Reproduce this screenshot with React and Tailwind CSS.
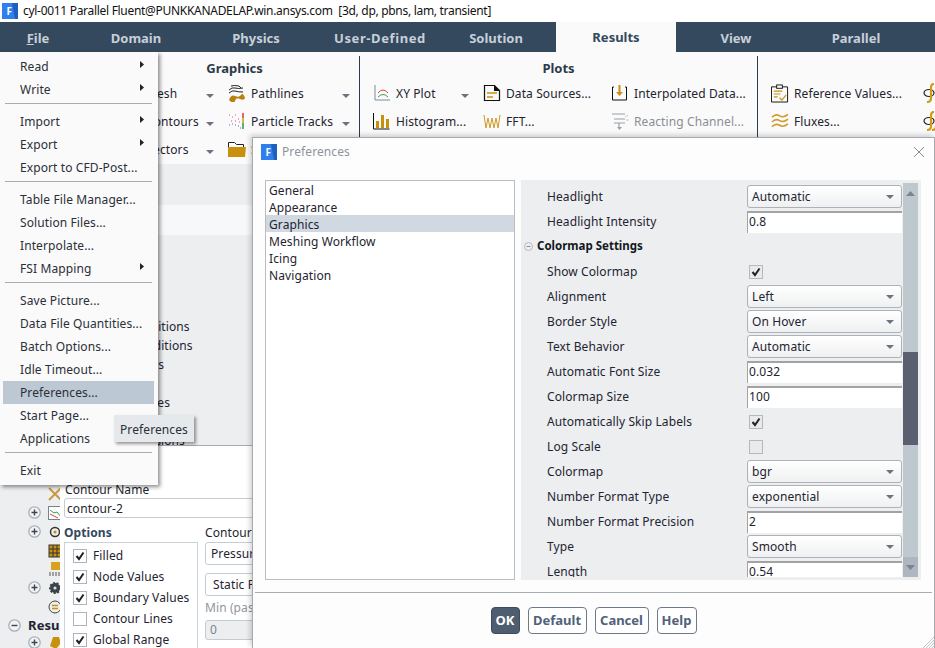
import React from 'react';

const FluentLogo = () => (
  <svg width="16" height="16" viewBox="0 0 16 16" className="shrink-0">
    <rect width="16" height="16" fill="#2f80ed" />
    <polygon points="10,0 16,0 16,16 13,16" fill="#1f5fc0" />
    <text x="4.5" y="12" fontSize="10" fontWeight="700" fill="#fff" fontFamily="Noto Sans">F</text>
  </svg>
);

const Caret = ({ className = '' }) => (
  <svg width="8" height="4" viewBox="0 0 8 4" className={`shrink-0 ${className}`}>
    <polygon points="0,0 8,0 4,4" fill="#6c7380" />
  </svg>
);

const SubArrow = () => (
  <svg width="4" height="7" viewBox="0 0 4 7" className="absolute left-[137px] top-[6px]">
    <polygon points="0,0 4,3.5 0,7" fill="#222" />
  </svg>
);

const Pathlines = () => (
  <svg width="18" height="18" viewBox="0 0 18 18">
    <path d="M1 6q3-3 6-2t8 0M1 9q3-3 6-2t8 1M3 2q3-1 8 0l2 2" fill="none" stroke="#222" strokeWidth="1" />
    <path d="M1 16q2-6 6-4t6-1 4 3q-1 3-5 1t-5 2-6-1z" fill="#b9810f" />
  </svg>
);
const ParticleTracks = () => (
  <svg width="18" height="18" viewBox="0 0 18 18">
    <path d="M1 3h1M4 5h1M7 3h1M10 7h1M3 9h1M7 9h1M11 10h1" stroke="#e2546a" strokeWidth="1" />
    <path d="M1 13h1M4 12h1M7 13h1M10 14h1M12 16h1" stroke="#4a6fd0" strokeWidth="1" />
    <path d="M15 1v5" stroke="#d33" strokeWidth="1.500" />
    <path d="M15 6v5" stroke="#c8a010" strokeWidth="1.500" />
    <path d="M15 11v6" stroke="#2a9a40" strokeWidth="1.500" />
  </svg>
);
const Folder = () => (
  <svg width="18" height="18" viewBox="0 0 18 18">
    <path d="M.5 10V2.500h6l2 2h7V8" fill="#fff" stroke="#222" strokeWidth="1" />
    <path d="M0 7h18l-1 10H0z" fill="#c9900f" />
  </svg>
);
const XYPlot = () => (
  <svg width="18" height="18" viewBox="0 0 18 18">
    <path d="M2 1v15h15" fill="none" stroke="#7b8ba0" strokeWidth="1" />
    <path d="M5 9q5-6 10 0" fill="none" stroke="#d8453a" strokeWidth="1" />
    <path d="M5 13q5-5 10 0" fill="none" stroke="#3f9b4a" strokeWidth="1" />
  </svg>
);
const Histogram = () => (
  <svg width="18" height="18" viewBox="0 0 18 18">
    <path d="M.5 1v16h16" fill="none" stroke="#111" strokeWidth="1" />
    <rect x="3" y="9" width="3" height="7" fill="#c9900f" />
    <rect x="8" y="3" width="3" height="13" fill="#c9900f" />
    <rect x="13" y="7" width="3" height="9" fill="#c9900f" />
  </svg>
);
const DataSources = () => (
  <svg width="18" height="18" viewBox="0 0 18 18">
    <path d="M1.500 1.500h10l5 5v10h-15z" fill="none" stroke="#111" strokeWidth="1.200" />
    <path d="M11 1l6 6h-6z" fill="#111" />
    <path d="M4 9h10M4 13h6" stroke="#c9900f" strokeWidth="1.600" />
  </svg>
);
const Fft = () => (
  <svg width="18" height="18" viewBox="0 0 18 18">
    <path d="M1 3l2 13 2-10 2 10 2-10 2 10 2-10 2 10 2-13" fill="none" stroke="#cf9b2a" strokeWidth="1" />
  </svg>
);
const Interpolated = () => (
  <svg width="18" height="18" viewBox="0 0 18 18">
    <path d="M3 3H1.500v13h14V3H14" fill="none" stroke="#111" strokeWidth="1" />
    <path d="M8.500 1v9" stroke="#c9900f" strokeWidth="2" />
    <path d="M5 8h7l-3.500 4z" fill="#c9900f" />
  </svg>
);
const Reacting = () => (
  <svg width="18" height="18" viewBox="0 0 18 18">
    <path d="M1 2h13M3 7h11M3 11h11M8 11v5" stroke="#9aa0a6" strokeWidth="1.200" fill="none" />
    <path d="M6 15h5l-2.500 3z" fill="#9aa0a6" />
    <path d="M14 5l3-2M15 8h3" stroke="#c3c7cb" strokeWidth="1" />
  </svg>
);
const Clipboard = () => (
  <svg width="19" height="19" viewBox="0 0 19 19">
    <path d="M.5 2.500h17v16H.5z" fill="none" stroke="#111" strokeWidth="1" />
    <rect x="6" y=".5" width="6" height="3.500" fill="#fff" stroke="#111" strokeWidth="1" />
    <path d="M3 7h9M3 10h7M3 13h4" stroke="#c9900f" strokeWidth="1.200" />
    <path d="M9 14l2.500 2.500L16 11" fill="none" stroke="#c9900f" strokeWidth="1.200" />
  </svg>
);
const Fluxes = () => (
  <svg width="19" height="18" viewBox="0 0 19 18">
    <path d="M1 5q4-4 8-1.500t9-1.500M1 10q4-4 8-1.500t9-1.500M1 15q4-4 8-1.500t9-1.500" fill="none" stroke="#cf9b2a" strokeWidth="1.600" />
  </svg>
);
const Integral = ({ double }) => (
  <svg width="18" height="20" viewBox="0 0 18 20" className="shrink-0">
    <ellipse cx="6" cy="10" rx="5" ry="3.500" fill="none" stroke="#222" strokeWidth="1.200" />
    <path d="M11 1q-3 0-3 4v10q0 4-4 4" fill="none" stroke="#d49a1a" strokeWidth="2.200" />
    {double && <path d="M16 1q-3 0-3 4v10q0 4-4 4" fill="none" stroke="#d49a1a" strokeWidth="2.200" />}
    <path d="M19 1q-3 0-3 4v10q0 4-4 4" fill="none" stroke="#d49a1a" strokeWidth="2.200" />
  </svg>
);

const RibbonItem = ({ icon, label, caret, grey, className = '' }) => (
  <div className={`flex items-center h-[28px] whitespace-nowrap ${className}`}>
    {icon && <span className="w-[18px] mr-[5px] shrink-0 flex justify-center">{icon}</span>}
    <span className={`pt-[2px] ${grey ? 'text-[#8a8f96]' : ''}`}>{label}</span>
    {caret && <Caret className="ml-auto mt-[5px]" />}
  </div>
);

const Ribbon = () => (
  <div className="flex h-[112px] bg-[#fafafa] text-[#1e2430]">
    <div className="w-[110px]" />
    <div className="w-[250px] border-r border-[#2b3a4d] mt-[4px] pt-[2px]">
      <div className="h-[21px] text-center font-bold text-[13px] tracking-normal text-[#2e3a4a] leading-[20px]">Graphics</div>
      <div className="flex pl-[36px]">
        <div className="w-[82px] pr-[14px]">
          <RibbonItem label="Mesh" caret />
          <RibbonItem label="Contours" caret />
          <RibbonItem label="Vectors" caret />
        </div>
        <div className="w-[124px] pr-[2px]">
          <RibbonItem icon={<Pathlines />} label="Pathlines" caret />
          <RibbonItem icon={<ParticleTracks />} label="Particle Tracks" caret />
          <RibbonItem icon={<Folder />} label="Scene" />
        </div>
      </div>
    </div>
    <div className="w-[398px] border-r border-[#2b3a4d] mt-[4px] pt-[2px]">
      <div className="h-[21px] text-center font-bold text-[13px] tracking-normal text-[#2e3a4a] leading-[20px]">Plots</div>
      <div className="flex pl-[13px]">
        <div className="w-[110px]">
          <RibbonItem icon={<XYPlot />} label="XY Plot" caret className="pr-[14px]" />
          <RibbonItem icon={<Histogram />} label="Histogram..." />
        </div>
        <div className="w-[128px]">
          <RibbonItem icon={<DataSources />} label="Data Sources..." />
          <RibbonItem icon={<Fft />} label="FFT..." />
        </div>
        <div>
          <RibbonItem icon={<Interpolated />} label="Interpolated Data..." />
          <RibbonItem icon={<Reacting />} label="Reacting Channel..." grey />
        </div>
      </div>
    </div>
    <div className="flex-1 min-w-0 overflow-hidden pt-[27px] pl-[13px] flex">
      <div className="w-[152px] shrink-0">
        <RibbonItem icon={<Clipboard />} label="Reference Values..." />
        <RibbonItem icon={<Fluxes />} label="Fluxes..." />
      </div>
      <div className="shrink-0">
        <div className="h-[28px] flex items-center"><Integral /></div>
        <div className="h-[28px] flex items-center"><Integral double /></div>
      </div>
    </div>
  </div>
);

const TopTabs = () => (
  <div className="flex h-[30px] bg-[#34495e] font-bold text-[13px] tracking-normal text-[#c7d0d9]">
    <div className="w-[76px] text-center leading-[32px]"><span className="underline">F</span>ile</div>
    <div className="w-[120px] text-center leading-[32px]">Domain</div>
    <div className="w-[120px] text-center leading-[32px]">Physics</div>
    <div className="w-[120px] pl-[8px] text-center leading-[32px] tracking-[0.6px]">User-Defined</div>
    <div className="w-[120px] text-center leading-[32px]">Solution</div>
    <div className="w-[120px] text-center leading-[30px] bg-[#fafafa] text-[#34495e]">Results</div>
    <div className="w-[120px] text-center leading-[32px]">View</div>
    <div className="w-[120px] text-center leading-[32px]">Parallel</div>
  </div>
);

const PlusDot = ({ minus }) => (
  <svg width="13" height="13" viewBox="0 0 13 13" className="shrink-0">
    <circle cx="6.500" cy="6.500" r="5.700" fill="#f2f3f5" stroke="#a9b1b9" strokeWidth="1.300" />
    <path d={minus ? 'M3.500 6.500h6' : 'M3.500 6.500h6M6.500 3.500v6'} stroke="#3e4650" strokeWidth="1.400" />
  </svg>
);

const TreeIcon = ({ kind }) => {
  if (kind === 'wrench') return <svg width="14" height="14" viewBox="0 0 14 14"><path d="M1 1l12 12M13 1L1 13" stroke="#c79a3f" strokeWidth="2" /></svg>;
  if (kind === 'mesh') return <svg width="14" height="14" viewBox="0 0 14 14"><rect x=".5" y=".5" width="13" height="13" fill="#fff" stroke="#77818c" /><path d="M2 4l4 3 3-1 4 5" fill="none" stroke="#3f9b4a" /><path d="M2 8l4 2 4 2" fill="none" stroke="#d8453a" /></svg>;
  if (kind === 'lens') return <svg width="14" height="14" viewBox="0 0 14 14"><circle cx="7" cy="7" r="4.500" fill="none" stroke="#333" strokeWidth="1.500" /><circle cx="7" cy="7" r="1.600" fill="#c9900f" /></svg>;
  if (kind === 'grid') return <svg width="14" height="14" viewBox="0 0 14 14"><rect x="1" y="1" width="12" height="12" fill="#c9900f" stroke="#333" /><path d="M5 1v12M9 1v12M1 5h12M1 9h12" stroke="#333" /></svg>;
  if (kind === 'tower') return <svg width="14" height="16" viewBox="0 0 14 16"><rect x="3" y="1" width="9" height="8" fill="#d9a21b" /><path d="M1 12h12M1 14h12" stroke="#555" strokeDasharray="2 1" /></svg>;
  if (kind === 'gear') return <svg width="14" height="14" viewBox="0 0 14 14"><circle cx="7" cy="7" r="5" fill="#3c424a" stroke="#3c424a" strokeWidth="2" strokeDasharray="2 1.500" /><circle cx="7" cy="7" r="1.600" fill="#d9dde1" /></svg>;
  if (kind === 'equals') return <svg width="14" height="14" viewBox="0 0 14 14"><circle cx="7" cy="7" r="6" fill="none" stroke="#444" /><path d="M4 5.500h6M4 8.500h6" stroke="#c9900f" strokeWidth="1.300" /></svg>;
  return <svg width="14" height="14" viewBox="0 0 14 14"><path d="M5 1h6l2 6-5 6-6-3z" fill="#c9900f" /></svg>;
};

const treeRows = [
  { kind: 'wrench', h: 'h-[19px]' },
  { kind: 'mesh', plus: true, h: 'h-[19px]' },
  { kind: 'lens', plus: true, h: 'h-[19px]' },
  { kind: 'grid', h: 'h-[19px]' },
  { kind: 'tower', h: 'h-[18px]' },
  { kind: 'gear', plus: true, h: 'h-[19px]' },
  { kind: 'equals', h: 'h-[19px]' },
];

const TreePanel = () => (
  <div className="w-[252px] h-[484px] bg-[#eceef0] text-[#1e2430] overflow-hidden">
    <div className="h-[41px]" />
    <div className="h-[30px] bg-[#f7f8f9] rounded-[3px]" />
    <div className="h-[81px]" />
    {['Cell Zone Conditions', 'Boundary Conditions', 'Mesh Interfaces', 'Dynamic Mesh', 'Reference Values', 'Reference Frames', 'Named Expressions'].map((t) => (
      <div key={t} className="h-[19px] pl-[72px] leading-[21px] whitespace-nowrap">{t}</div>
    ))}
    <div className="h-[35px]" />
    {treeRows.map((r) => (
      <div key={r.kind} className={`flex items-center ${r.h} pl-[28px]`}>
        <span className="w-[20px] shrink-0">{r.plus && <PlusDot />}</span>
        <TreeIcon kind={r.kind} />
      </div>
    ))}
    <div className="flex items-center h-[19px] pl-[8px] font-bold text-[13px] whitespace-nowrap">
      <PlusDot minus />
      <span className="ml-[7px]">Results</span>
    </div>
    <div className="flex items-center h-[15px] pl-[28px]">
      <span className="w-[20px] shrink-0"><PlusDot /></span>
      <TreeIcon kind="blob" />
    </div>
  </div>
);

const menuGroups = [
  [['Read', 1], ['Write', 1]],
  [['Import', 1], ['Export', 1], ['Export to CFD-Post...']],
  [['Table File Manager...'], ['Solution Files...'], ['Interpolate...'], ['FSI Mapping', 1]],
  [['Save Picture...'], ['Data File Quantities...'], ['Batch Options...'], ['Idle Timeout...'], ['Preferences...'], ['Start Page...'], ['Applications']],
  [['Exit']],
];

const FileMenu = () => (
  <div className="absolute left-0 top-[52px] w-[158px] bg-[#fafafa] pt-[3px] pb-[3px] pl-[3px] pr-[4px] text-[#2a2f38] shadow-[2px_2px_4px_rgba(0,0,0,0.45)] z-30">
    {menuGroups.map((group, i) => (
      <div key={i}>
        {i > 0 && <div className="h-[9px] pt-[2px] px-[2px]"><div className="h-px w-full bg-[#a9acb0]" /></div>}
        {group.map(([label, sub]) => (
          <div key={label} className={`relative h-[23px] pl-[17px] leading-[24px] whitespace-nowrap ${label === 'Preferences...' ? 'bg-[#bcc8d3]' : ''}`}>
            {label}
            {sub && <SubArrow />}
          </div>
        ))}
      </div>
    ))}
  </div>
);

const SmallCheck = ({ checked, light }) => (
  <span className={`w-[14px] h-[14px] shrink-0 border flex items-center justify-center ${light ? 'border-[#b5b9bd] bg-[#e8eaec]' : 'border-[#aeb4ba] bg-white'}`}>
    {checked ? (
      <svg width="10" height="10" viewBox="0 0 10 10">
        <path d="M1.500 5l2.500 3L8.500 1.500" fill="none" stroke="#222" strokeWidth="2" />
      </svg>
    ) : null}
  </span>
);

const ContourDialog = () => (
  <div className="absolute left-[60px] top-[445px] w-[400px] h-[203px] border-t border-[#a8acb0] bg-white text-[#1e2430] overflow-hidden z-10">
    <div className="h-[35px]" />
    <div className="pl-[5px] h-[17px] leading-[17px]">Contour Name</div>
    <div className="ml-[4px] h-[20px] border border-[#c3cbd3] rounded-[3px] pl-[2px] leading-[20px]">contour-2</div>
    <div className="flex pl-[4px] mt-[6px]">
      <div className="w-[134px] shrink-0">
        <div className="font-bold text-[#34495e] h-[18px] leading-[18px]">Options</div>
        <div className="border border-[#ccd3da] h-[110px] pt-[2px] pl-[8px]">
          {[['Filled', 1], ['Node Values', 1], ['Boundary Values', 1], ['Contour Lines', 0], ['Global Range', 1]].map(([t, c]) => (
            <div key={t} className="flex items-center h-[21px] gap-[6px] whitespace-nowrap">
              <SmallCheck checked={c} />
              {t}
            </div>
          ))}
        </div>
      </div>
      <div className="ml-[7px] w-[200px]">
        <div className="h-[18px] leading-[18px]">Contours of</div>
        <div className="h-[23px] border border-[#c3cbd3] rounded-[3px] pl-[5px] leading-[21px]">Pressure...</div>
        <div className="h-[23px] mt-[8px] border border-[#c3cbd3] rounded-[3px] pl-[7px] leading-[21px] whitespace-nowrap">Static Pressure</div>
        <div className="h-[24px] leading-[24px] text-[#8f969d]">Min (pascal)</div>
        <div className="h-[20px] border border-[#c3cbd3] bg-[#eceef0] rounded-[3px] pl-[4px] leading-[18px] text-[#7d848b]">0</div>
      </div>
    </div>
  </div>
);

const prefRows = [
  { l: 'Headlight', s: 'Automatic' },
  { l: 'Headlight Intensity', i: '0.8' },
  { head: 'Colormap Settings' },
  { l: 'Show Colormap', c: 1 },
  { l: 'Alignment', s: 'Left' },
  { l: 'Border Style', s: 'On Hover' },
  { l: 'Text Behavior', s: 'Automatic' },
  { l: 'Automatic Font Size', i: '0.032' },
  { l: 'Colormap Size', i: '100' },
  { l: 'Automatically Skip Labels', c: 1 },
  { l: 'Log Scale', c: 2 },
  { l: 'Colormap', s: 'bgr' },
  { l: 'Number Format Type', s: 'exponential' },
  { l: 'Number Format Precision', i: '2' },
  { l: 'Type', s: 'Smooth' },
  { l: 'Length', i: '0.54' },
];

const PrefRow = ({ row }) => {
  if (row.head) {
    return (
      <div className="flex items-center h-[25px] pl-[3px] pb-px font-bold text-[11.5px] tracking-normal text-[#111820]">
        <svg width="9" height="9" viewBox="0 0 9 9" className="mr-[4px]">
          <circle cx="4.500" cy="4.500" r="4" fill="none" stroke="#b6bbc0" />
          <path d="M2.500 4.500h4" stroke="#8b9097" />
        </svg>
        {row.head}
      </div>
    );
  }
  return (
    <div className="flex items-center h-[25px]">
      <div className="w-[226px] pl-[26px] whitespace-nowrap">{row.l}</div>
      {row.s && (
        <div className="w-[155px] h-[23px] flex items-center justify-between pl-[4px] pr-[7px] border border-[#aeb2b6] rounded-[3px] bg-gradient-to-b from-white to-[#eff0f1]">
          {row.s}
          <Caret />
        </div>
      )}
      {row.i && (
        <div className="w-[155px] h-[22px] pl-[1px] leading-[17px] bg-white border-t-2 border-l border-[#a3a3a3]">{row.i}</div>
      )}
      {row.c && (
        <div className="pl-[2px]"><SmallCheck checked={row.c === 1} light /></div>
      )}
    </div>
  );
};

const ScrollBar = () => (
  <div className="w-[15px] my-[3px] ml-[1px] flex flex-col bg-[#bec8cf]">
    <div className="h-[20px] flex items-center justify-center">
      <svg width="9" height="5" viewBox="0 0 9 5"><polygon points="0,5 9,5 4.500,0" fill="#7c848e" /></svg>
    </div>
    <div className="h-[149px]" />
    <div className="h-[93px] bg-[#5a6070]" />
    <div className="flex-1" />
    <div className="h-[20px] flex items-center justify-center bg-[#aeb7bf]">
      <svg width="9" height="5" viewBox="0 0 9 5"><polygon points="0,0 9,0 4.500,5" fill="#7c848e" /></svg>
    </div>
  </div>
);

const DialogButton = ({ children, primary, width }) => (
  <button className={`h-[27px] ${width} border rounded-[4px] font-bold text-[13px] tracking-normal ${primary ? 'bg-[#4f5d70] border-[#3f4b5b] text-white' : 'bg-white border-[#6f7a88] text-[#51617a]'}`}>
    {children}
  </button>
);

const PreferencesDialog = () => (
  <div className="absolute left-[252px] top-[137px] w-[683px] h-[511px] bg-[#fdfdfd] border-l border-t border-r border-[#a6a9ad] shadow-[-2px_-2px_5px_rgba(0,0,0,0.18)] text-[#1e2430] z-20">
    <div className="flex items-center h-[28px] pl-[8px] pr-[8px]">
      <FluentLogo />
      <span className="ml-[5px] text-[#8f949a]">Preferences</span>
      <svg width="12" height="12" viewBox="0 0 12 12" className="ml-auto mr-[1px]">
        <path d="M1 1l10 10M11 1L1 11" stroke="#8a8d91" strokeWidth="1" />
      </svg>
    </div>
    <div className="flex mt-[14px] pl-[12px] h-[400px]">
      <div className="w-[250px] border border-[#b9bcc0] bg-white">
        {['General', 'Appearance', 'Graphics', 'Meshing Workflow', 'Icing', 'Navigation'].map((t) => (
          <div key={t} className={`h-[17px] leading-[19px] pl-[3px] ${t === 'Graphics' ? 'bg-[#d0d8e1]' : ''}`}>{t}</div>
        ))}
      </div>
      <div className="w-[400px] ml-[6px] bg-[#eceef0] flex pr-[3px]">
        <div className="flex-1 min-w-0 my-[3px] pt-px overflow-hidden">
          {prefRows.map((r) => <PrefRow key={r.l || r.head} row={r} />)}
        </div>
        <ScrollBar />
      </div>
    </div>
    <div className="h-px bg-[#a9acb0] mt-[12px] mx-[2px]" />
    <div className="flex justify-center gap-[8px] mt-[14px]">
      <DialogButton primary width="w-[29px]">OK</DialogButton>
      <DialogButton width="w-[59px]">Default</DialogButton>
      <DialogButton width="w-[54px]">Cancel</DialogButton>
      <DialogButton width="w-[40px]">Help</DialogButton>
    </div>
    <svg width="12" height="12" viewBox="0 0 12 12" className="absolute right-0 bottom-0">
      <path d="M12 1L1 12M12 4L4 12M12 7l-5 5M12 10l-2 2" stroke="#a8abaf" strokeWidth=".7" />
    </svg>
  </div>
);

export default function App() {
  return (
    <div className="relative w-[935px] h-[648px] overflow-hidden bg-white font-['Noto_Sans',sans-serif] text-[12px] tracking-[0.1px]">
      <div className="flex items-center h-[22px] pl-[2px] bg-white text-[#111]">
        <FluentLogo />
        <span className="ml-[5px] whitespace-pre tracking-[-0.3px]">cyl-0011 Parallel Fluent@PUNKKANADELAP.win.ansys.com  [3d, dp, pbns, lam, transient]</span>
      </div>
      <TopTabs />
      <Ribbon />
      <TreePanel />
      <ContourDialog />
      <PreferencesDialog />
      <FileMenu />
      <div className="absolute left-[114px] top-[415px] w-[80px] h-[27px] bg-[#e6e9ec] pl-[6px] leading-[29px] text-[#2a2f38] shadow-[2px_2px_3px_rgba(0,0,0,0.4)] z-40">Preferences</div>
    </div>
  );
}
